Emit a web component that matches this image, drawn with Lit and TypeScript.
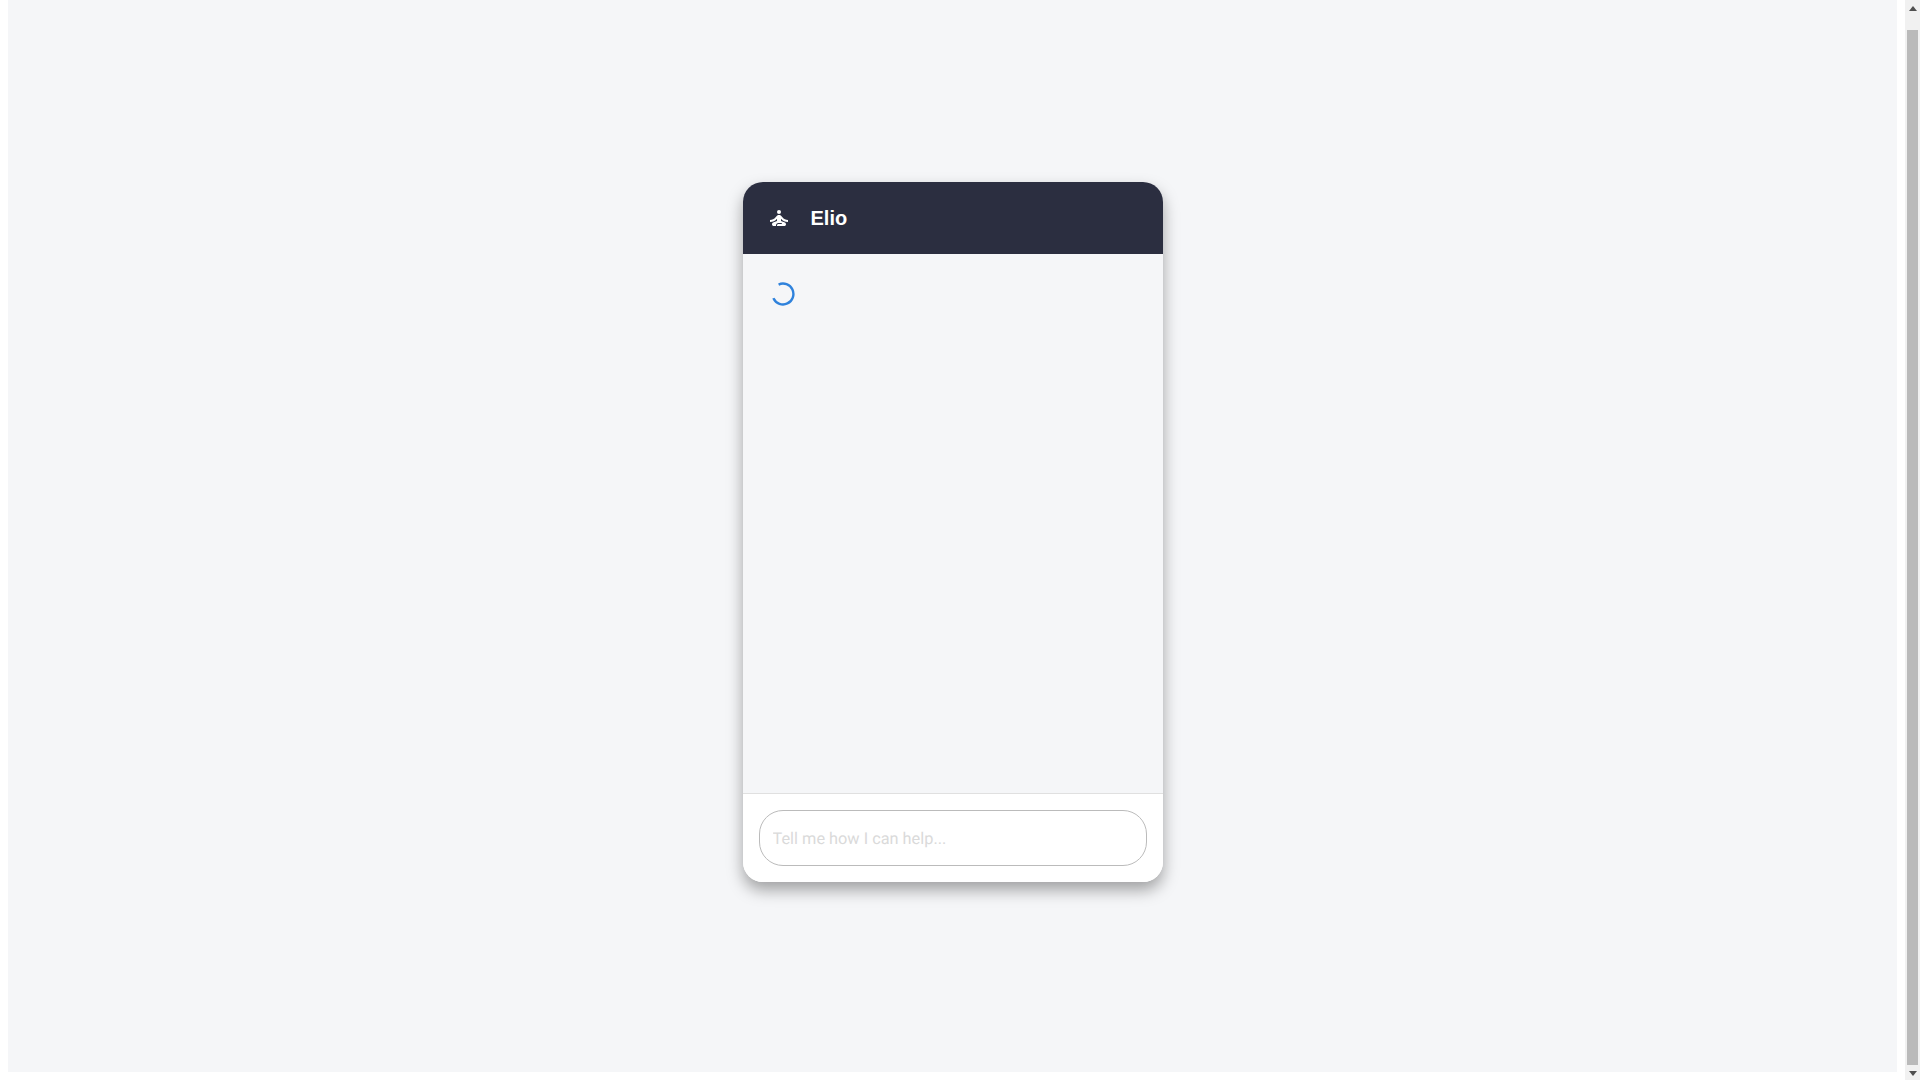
import { LitElement, html, css } from "lit";
import { customElement } from "lit/decorators.js";

@customElement("app-root")
export class AppRoot extends LitElement {
  static styles = css`
    :host { display: flex; width: 100%; height: 1080px; overflow: hidden; background: #fff; font-family: "Roboto", sans-serif; }
    .page { flex: 1; min-width: 0; padding: 0 8px 8px; box-sizing: border-box; height: 1080px; overflow: hidden; }
    .stage { height: 1080px; margin-top: -8px; background: #f5f6f8; display: flex; align-items: center; justify-content: center; }
    .card { width: 420px; height: 700px; border-radius: 20px; background: #fff; overflow: hidden; display: flex; flex-direction: column; box-shadow: 0 8px 16px rgba(0,0,0,.35); }
    .header { height: 72px; flex: none; background: #2b2e40; color: #fff; display: flex; align-items: center; padding: 0 24px; box-sizing: border-box; gap: 20px; }
    .header svg { width: 24px; height: 24px; display: block; fill: #fff; }
    .name { font: 700 20px/24px "Liberation Sans", sans-serif; }
    .messages { flex: 1; background: #f5f6f8; padding: 28px; box-sizing: border-box; }
    .spinner { width: 24px; height: 24px; display: block; }
    .footer { flex: none; height: 89px; box-sizing: border-box; border-top: 1px solid #e0e0e0; padding: 16px; display: flex; background: #fff; }
    .input { flex: 1; height: 56px; box-sizing: border-box; border: 1px solid #bbbbbb; border-radius: 24px; background: #fff; padding: 0 13px; font: 16.32px "Roboto", sans-serif; text-rendering: geometricPrecision; color: #333; outline: none; }
    .input::placeholder { color: #dadada; opacity: 1; }
    .scrollbar { width: 15px; flex: none; background: #f1f1f1; display: flex; flex-direction: column; align-items: center; height: 1080px; }
    .arrow { height: 17px; flex: none; display: flex; align-items: center; justify-content: center; }
    .arrow svg { width: 8px; height: 5px; fill: #505050; display: block; }
    .track { flex: 1; width: 100%; padding: 13px 2px 0; box-sizing: border-box; display: flex; }
    .thumb { flex: 1; height: 1035px; background: #bababa; }
  `;

  render() {
    return html`
      <div class="page">
        <div class="stage">
          <section class="card">
            <header class="header">
              <svg viewBox="0 0 24 24" aria-hidden="true"><circle cx="12" cy="6" r="2"/><path d="M21 16v-2c-2.24 0-4.16-.96-5.6-2.68l-1.34-1.6A1.98 1.98 0 0 0 12.53 9h-1.05c-.59 0-1.15.26-1.53.72l-1.34 1.6C7.16 13.04 5.24 14 3 14v2c2.77 0 5.19-1.17 7-3.25V15l-3.88 1.55c-.67.27-1.12.93-1.12 1.66C5 19.2 5.8 20 6.79 20H9v-.5a2.5 2.5 0 0 1 2.5-2.5h3c.28 0 .5.22.5.5s-.22.5-.5.5h-3c-.83 0-1.5.67-1.5 1.5v.5h7.21c.99 0 1.79-.8 1.79-1.79 0-.73-.45-1.39-1.12-1.66L14 15v-2.25c1.81 2.08 4.23 3.25 7 3.25z"/></svg>
              <span class="name">Elio</span>
            </header>
            <div class="messages">
              <svg class="spinner" viewBox="0 0 24 24" aria-hidden="true"><circle cx="12" cy="12" r="10.4" fill="none" stroke="#2f82dc" stroke-width="2.4" stroke-dasharray="49 16.3" transform="rotate(-115 12 12)"/></svg>
            </div>
            <footer class="footer">
              <input class="input" placeholder="Tell me how I can help..." />
            </footer>
          </section>
        </div>
      </div>
      <div class="scrollbar">
        <div class="arrow"><svg viewBox="0 0 8 5"><path d="M4 0 8 5H0z"/></svg></div>
        <div class="track"><div class="thumb"></div></div>
        <div class="arrow"><svg viewBox="0 0 8 5"><path d="M0 0H8L4 5z"/></svg></div>
      </div>
    `;
  }
}
